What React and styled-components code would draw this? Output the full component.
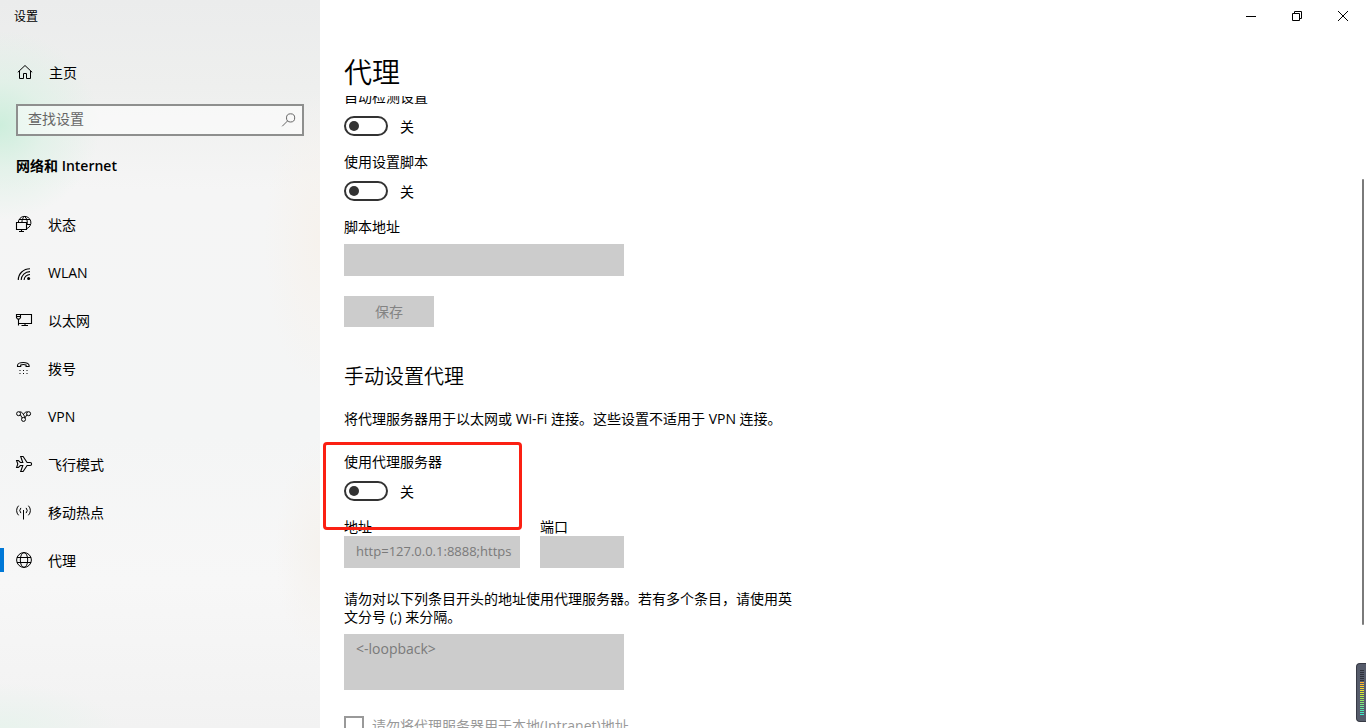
import React, { useLayoutEffect, useRef } from 'react';
import styled, { createGlobalStyle } from 'styled-components';

const Icon = ({ children, size = 16 }) => (
    <svg width={size} height={size} viewBox={`0 0 ${size} ${size}`} fill="none" stroke="currentColor" strokeWidth="1" overflow="visible" aria-hidden="true">
        {children}
    </svg>
);

const HomeIcon = () => (
    <Icon>
        <path d="M0.8 8.3 8 1.5l7.2 6.8M2.5 7v7.5h4v-5h3v5h4V7" />
    </Icon>
);

const SearchIcon = () => (
    <Icon>
        <circle cx="9.6" cy="5.9" r="4.1" />
        <path d="M6.7 8.8 1.2 14.3" />
    </Icon>
);

const StatusIcon = () => (
    <Icon>
        <path d="M2.3 6.5A6.3 6.3 0 1 1 11 12.5M3 3.5h11M11 8.5h4M8.5.4C6.7 2 6 3.6 5.9 6.5M8.5.4c2.5 2 3.2 4.6 2.6 8.1" />
        <path d="M.5 6.5h10v7H.5zM5.5 13.5v2M3 15.5h5" strokeWidth="1.1" />
    </Icon>
);

const WlanIcon = () => (
    <Icon>
        <path d="M2.3 16A11.7 11.2 0 0 1 14 4.7M5.2 16A8.8 8.4 0 0 1 14 7.6M8.1 16a6 5.6 0 0 1 5.9-5.5" strokeWidth="1.1" />
        <circle cx="12.6" cy="14.6" r="1.5" fill="currentColor" stroke="none" />
    </Icon>
);

const EthernetIcon = () => (
    <Icon>
        <path d="M4.5 2.5h11v9h-13V7M2.5 11v2.5M9 11.5v2M5.5 13.5h6.5M.5 2.5h4v3L3.5 7h-2l-1-1.5zM.5 4.5h4" strokeWidth="1.1" />
    </Icon>
);

const DialIcon = () => (
    <Icon>
        <path d="M1.5 6.5V5.4c0-3.8 11.6-3.8 11.6 0v1.1h-3V5c-1.2-.5-4.2-.5-5.4 0v1.5z" strokeWidth="1.1" />
        <path d="M3.5 10.5h1m2.5 0h1m2.5 0h1M3.5 13.5h1m2.5 0h1m2.5 0h1" />
    </Icon>
);

const VpnIcon = () => (
    <Icon>
        <circle cx="2.6" cy="5.7" r="2" />
        <circle cx="12.6" cy="5.7" r="2" />
        <circle cx="7.5" cy="11.4" r="2" />
        <path d="M3.6 4c2.1-.7 4.2 2 5.3 5.8M4.4 6.8l1.7 3.1M11.6 4c-1.6-.6-3.3.8-4.3 2.7M10.8 6.8 9 9.9" />
    </Icon>
);

const PlaneIcon = () => (
    <Icon>
        <path d="M.6 4.5h1.8l2 2h2.4L4.7.5h2.4l4 6h3a1.5 1.5 0 0 1 0 3h-3l-4 6H4.7l2.1-6H4.4l-2 2H.6L1.8 8z" strokeWidth="1.1" />
    </Icon>
);

const HotspotIcon = () => (
    <Icon>
        <path d="M7.5 6v9.5M4.9 3.9a3.9 3.9 0 0 0 0 5.2M10.1 3.9a3.9 3.9 0 0 1 0 5.2M2.6 1.7a6.8 6.8 0 0 0 0 9.6M12.4 1.7a6.8 6.8 0 0 1 0 9.6" />
    </Icon>
);

const GlobeIcon = () => (
    <Icon>
        <circle cx="8" cy="8" r="7.4" />
        <ellipse cx="8" cy="8" rx="3.7" ry="7.4" />
        <path d="M1 5.5h14M1 10.5h14" />
    </Icon>
);

const links = [
    { text: '状态', icon: <StatusIcon /> },
    { text: 'WLAN', icon: <WlanIcon /> },
    { text: '以太网', icon: <EthernetIcon /> },
    { text: '拨号', icon: <DialIcon /> },
    { text: 'VPN', icon: <VpnIcon /> },
    { text: '飞行模式', icon: <PlaneIcon /> },
    { text: '移动热点', icon: <HotspotIcon /> },
    { text: '代理', icon: <GlobeIcon />, active: true },
];

const bars = [
    '#2d3039', '#2d3039', '#2d3039', '#2d3039', '#2d3039', '#2d3039',
    '#ffb02e', '#ffbe2e', '#fbcb2e', '#f3d82e', '#eae32e', '#dcea32', '#c8ea3a', '#b6ea46', '#a4ea54',
    '#96ea64', '#88ea74', '#7cea84', '#6eea94', '#60eaa2', '#52eab0', '#46eabe', '#3ceacc',
];

const ToggleRow = ({ id, label }) => (
    <Setting>
        <Label htmlFor={id}>{label}</Label>
        <div className="row">
            <Switch type="checkbox" role="switch" id={id} />
            <span>关</span>
        </div>
    </Setting>
);

const Sidebar = () => {
    return (
        <Side>
            <AppName>设置</AppName>
            <NavLink href="#home" $home>
                <HomeIcon />
                <span>主页</span>
            </NavLink>
            <SearchBox>
                <input type="text" placeholder="查找设置" aria-label="查找设置" />
                <SearchIcon />
            </SearchBox>
            <h2>网络和 Internet</h2>
            <nav>
                {links.map((link) => (
                    <NavLink href={`#${link.text}`} key={link.text} $active={link.active}>
                        {link.icon}
                        <span>{link.text}</span>
                    </NavLink>
                ))}
            </nav>
        </Side>
    );
};

const WindowButtons = () => (
    <TitleBar>
        <button type="button" aria-label="最小化">
            <Icon size={10}><path d="M0 5.5h10" /></Icon>
        </button>
        <button type="button" aria-label="还原">
            <Icon size={10}><path d="M.5 2.5h7v7h-7zM2.5 2.5v-2h7v7h-2" /></Icon>
        </button>
        <button type="button" aria-label="关闭">
            <Icon size={10}><path d="M0 0l10 10M10 0 0 10" /></Icon>
        </button>
    </TitleBar>
);

const App = () => {
    const page = useRef(null);

    // the page opens slightly scrolled, under the fixed heading
    useLayoutEffect(() => {
        page.current.scrollTop = 8;
    }, []);

    return (
        <Window>
            <GlobalStyle />
            <Sidebar />
            <Main>
                <WindowButtons />
                <h1>代理</h1>
                <Page ref={page}>
                    <ToggleRow id="detect" label="自动检测设置" />
                    <ToggleRow id="script" label="使用设置脚本" />
                    <Label htmlFor="script-url">脚本地址</Label>
                    <ScriptInput id="script-url" type="text" disabled />
                    <SaveButton type="button" disabled>保存</SaveButton>

                    <h2>手动设置代理</h2>
                    <p>将代理服务器用于以太网或 Wi-Fi 连接。这些设置不适用于 VPN 连接。</p>
                    <Marked>
                        <ToggleRow id="proxy" label="使用代理服务器" />
                    </Marked>
                    <Fields>
                        <div className="address">
                            <Label htmlFor="address">地址</Label>
                            <Input id="address" type="text" defaultValue="http=127.0.0.1:8888;https=127.0.0.1:8888" disabled $long />
                        </div>
                        <div className="port">
                            <Label htmlFor="port">端口</Label>
                            <Input id="port" type="text" disabled />
                        </div>
                    </Fields>
                    <Exceptions>
                        <Label htmlFor="exceptions">请勿对以下列条目开头的地址使用代理服务器。若有多个条目，请使用英文分号 (;) 来分隔。</Label>
                        <TextArea id="exceptions" defaultValue="<-loopback>" disabled />
                    </Exceptions>
                    <Check>
                        <input type="checkbox" disabled />
                        <span>请勿将代理服务器用于本地(Intranet)地址</span>
                    </Check>
                </Page>
            </Main>
            <ScrollThumb />
            <Meter>
                {bars.map((color, i) => (
                    <i key={i} style={{ background: color }} />
                ))}
            </Meter>
        </Window>
    );
};

export default App;

const GlobalStyle = createGlobalStyle`
    *, *::before, *::after {
        box-sizing: border-box;
    }
    body {
        margin: 0;
        color: #000;
        background: #fff;
        font: 14px/18px "Open Sans", "Noto Sans CJK SC", sans-serif;
    }
    h1, h2, p {
        margin: 0;
    }
    input, button, textarea {
        font: inherit;
        margin: 0;
    }
`

const Window = styled.div`
    display: flex;
    position: relative;
    height: 100vh;
    overflow: hidden;
`

const Side = styled.aside`
    flex: 0 0 320px;
    background:
        radial-gradient(ellipse 100px 95px at 0 125px, #cdeedc, #dcf1e5b0 45%, #e8f2ec00),
        radial-gradient(ellipse 55px 150px at 100% 240px, #f6f2ed, #f6f2ed00),
        radial-gradient(ellipse 45px 110px at 100% 550px, #f5f2ee, #f5f2ee00),
        radial-gradient(ellipse 120px 45px at 0 100%, #e8f3ed, #e8f3ed00),
        linear-gradient(#ebecec, #eeefee 12%, #f5f5f5 26%, #f4f5f5 60%, #f7f7f7 80%, #f2f2f2);

    h2 {
        margin: 20px 16px 24px;
        line-height: 20px;
        font-size: 14px;
        font-weight: 600;
    }
`

const AppName = styled.div`
    height: 48px;
    padding: 8px 14px;
    font-size: 12px;
`

const NavLink = styled.a`
    display: flex;
    align-items: center;
    gap: 16px;
    height: 48px;
    padding-left: ${(p) => (p.$home ? '17px' : '16px')};
    color: #000;
    text-decoration: none;

    &::before {
        content: '';
        display: ${(p) => (p.$active ? 'block' : 'none')};
        width: 4px;
        height: 24px;
        margin: 0 -4px 0 -16px;
        background: #0078d7;
    }
    span {
        padding-top: 2px;
    }
`

const SearchBox = styled.div`
    display: flex;
    align-items: center;
    height: 32px;
    margin: 8px 16px 0;
    padding: 0 5px 0 10px;
    border: 2px solid #8e8f8e;
    background: #ffffff80;
    color: #666;

    input {
        flex: 1;
        min-width: 0;
        padding: 0 0 2px;
        border: 0;
        outline: 0;
        background: transparent;
    }
    input::placeholder {
        color: #666;
    }
`

const Main = styled.main`
    display: flex;
    flex: 1;
    flex-direction: column;
    min-width: 0;

    h1 {
        padding: 20px 24px 4px;
        font-size: 28px;
        font-weight: 350;
        line-height: 40px;
    }
`

const TitleBar = styled.header`
    display: flex;
    flex: none;
    justify-content: flex-end;
    height: 32px;

    button {
        display: flex;
        align-items: center;
        justify-content: center;
        width: 46px;
        border: 0;
        background: transparent;
        color: #000;
    }
`

const Page = styled.section`
    flex: 1;
    min-height: 0;
    padding: 0 24px 48px;
    overflow-y: auto;
    scrollbar-width: none;

    h2 {
        margin: 36px 0 19px;
        font-size: 20px;
        font-weight: 350;
        line-height: 28px;
    }
    p {
        margin-bottom: 25px;
    }
`

const Label = styled.label`
    display: block;
`

const Setting = styled.div`
    margin-bottom: 17px;

    .row {
        display: flex;
        align-items: center;
        gap: 12px;
        height: 20px;
        margin-top: 10px;
    }
    span {
        padding-top: 2px;
    }
`

const Switch = styled.input`
    appearance: none;
    display: flex;
    align-items: center;
    width: 44px;
    height: 20px;
    padding: 0 3px;
    border: 2px solid #333;
    border-radius: 10px;

    &::before {
        content: '';
        width: 10px;
        height: 10px;
        border-radius: 50%;
        background: #333;
    }
    &:checked {
        justify-content: flex-end;
    }
`

const Input = styled.input`
    display: block;
    width: 100%;
    height: 32px;
    padding: 0 8px 2px 12px;
    border: 0;
    background: #ccc;
    color: #7a7a7a;
    font-size: ${(p) => (p.$long ? '13px' : '14px')};
`

const ScriptInput = styled(Input)`
    width: 280px;
    margin-top: 8px;
`

const SaveButton = styled.button`
    display: block;
    width: 90px;
    height: 31px;
    margin-top: 20px;
    border: 0;
    background: #ccc;
    color: #838383;
`

const Marked = styled.div`
    position: relative;

    &::after {
        content: '';
        position: absolute;
        top: -11px;
        left: -21px;
        width: 199px;
        height: 88px;
        border: 3px solid #fb2013;
        border-radius: 4px;
        pointer-events: none;
    }
`

const Fields = styled.div`
    display: flex;
    gap: 20px;

    .address {
        width: 176px;
    }
    .port {
        width: 84px;
    }
`

const Exceptions = styled.div`
    max-width: 450px;
    margin: 22px 0 26px;
`

const TextArea = styled.textarea`
    display: block;
    width: 280px;
    height: 56px;
    margin-top: 8px;
    padding: 6px 12px;
    border: 0;
    resize: none;
    background: #ccc;
    color: #7a7a7a;
`

const Check = styled.label`
    display: flex;
    align-items: center;
    gap: 8px;
    color: #999;

    input {
        appearance: none;
        width: 20px;
        height: 20px;
        border: 2px solid #999;
    }
`

const ScrollThumb = styled.div`
    position: absolute;
    top: 179px;
    right: 2px;
    bottom: 103px;
    width: 2px;
    border-radius: 1px;
    background: #7a7a7a;
`

const Meter = styled.div`
    display: flex;
    flex-direction: column;
    gap: 1px;
    position: absolute;
    right: 0;
    bottom: 6px;
    width: 10px;
    height: 59px;
    padding: 6px 2px 0 3px;
    border: 1px solid #373a45;
    border-right: 0;
    border-radius: 4px 0 0 4px;
    background: #565c6b;

    i {
        flex: none;
        height: 1px;
    }
`
